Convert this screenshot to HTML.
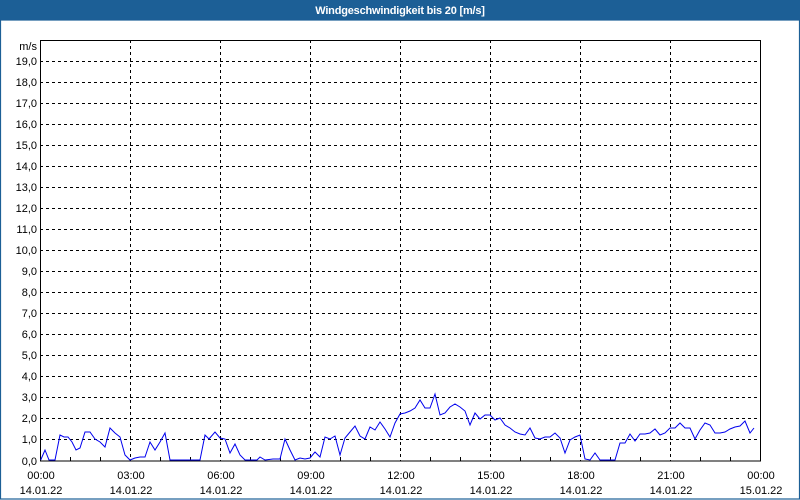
<!DOCTYPE html>
<html><head><meta charset="utf-8"><style>
html,body{margin:0;padding:0;background:#fff}
svg{display:block}
text{font-family:"Liberation Sans","DejaVu Sans",sans-serif;font-size:11px;fill:#000}
</style></head><body>
<svg width="800" height="500" viewBox="0 0 800 500" xmlns="http://www.w3.org/2000/svg">
<rect x="0" y="0" width="800" height="500" fill="#fff"/>
<rect x="0" y="0" width="800" height="20" fill="#1c5f96"/>
<rect x="0.5" y="20" width="799" height="479" fill="none" stroke="#1c5f96" stroke-width="1.2"/>
<text x="400" y="14" text-anchor="middle" style="font-weight:bold;fill:#fff;font-size:11px;letter-spacing:-0.2px">Windgeschwindigkeit bis 20 [m/s]</text>
<g stroke="#000" stroke-width="1" stroke-dasharray="3,3" shape-rendering="crispEdges">
<path d="M40 61.5H760M40 82.5H760M40 103.5H760M40 124.5H760M40 145.5H760M40 166.5H760M40 187.5H760M40 208.5H760M40 229.5H760M40 250.5H760M40 271.5H760M40 292.5H760M40 313.5H760M40 334.5H760M40 355.5H760M40 376.5H760M40 397.5H760M40 418.5H760M40 439.5H760"/>
<path d="M130.5 40V461M220.5 40V461M310.5 40V461M400.5 40V461M490.5 40V461M580.5 40V461M670.5 40V461"/>
</g>
<rect x="40.5" y="40.5" width="720" height="420.5" fill="none" stroke="#000" stroke-width="1" shape-rendering="crispEdges"/>
<g stroke="#000" stroke-width="1" shape-rendering="crispEdges">
<path d="M70.5 461V457M100.5 461V457M160.5 461V457M190.5 461V457M250.5 461V457M280.5 461V457M340.5 461V457M370.5 461V457M430.5 461V457M460.5 461V457M520.5 461V457M550.5 461V457M610.5 461V457M640.5 461V457M700.5 461V457M730.5 461V457"/>
</g>
<polyline fill="none" stroke="#0000ee" stroke-width="1" points="40.7,460 45,450 49,460 55,460 60,435 64,437 68,437 72,442 76,450 80,448 85,432 90,432 95,439 100,442 105,447 110,428 115,433 120,437 125,455 130,460 135,458 140,457 145,457 150,442 155,450 160,442 165,433 170,460 200,460 205,435 209,439 215,432 220,438 225,439 230,453 235,444 240,455 245,460 257,460 260,457 265,460 273,459 280,459 285,439 290,450 295,460 300,458 305,459 310,458 315,452 320,457 325,437 330,439 335,436 340,455 345,438 350,432 355,426 360,436 365,439 370,427 375,430 380,422 385,429 390,437 395,423 400,414 405,413 410,411 415,408 420,400 425,408 430,408 435,394 440,415 445,413 450,407 455,404 460,407 465,411 470,425 475,413 480,419 485,415 490,415 495,420 500,418 505,425 510,428 515,432 520,434 525,435 530,428 535,438 540,439 545,437 550,437 555,433 560,438 565,453 570,440 575,437 580,435 585,459 590,460 595,453 600,460 615,460 620,443 625,443 630,434 635,441 640,434 645,434 650,433 655,429 660,435 665,433 670,428 675,428 680,423 685,428 690,428 695,439 700,430 705,423 710,425 715,433 720,433 725,432 730,429 735,427 740,426 745,421 750,433 754,428"/>
<g text-anchor="end">
<text x="37" y="50">m/s</text>
<text x="37" y="65">19,0</text><text x="37" y="86">18,0</text><text x="37" y="107">17,0</text><text x="37" y="128">16,0</text><text x="37" y="149">15,0</text><text x="37" y="170">14,0</text><text x="37" y="191">13,0</text><text x="37" y="212">12,0</text><text x="37" y="233">11,0</text><text x="37" y="254">10,0</text><text x="37" y="275">9,0</text><text x="37" y="296">8,0</text><text x="37" y="317">7,0</text><text x="37" y="338">6,0</text><text x="37" y="359">5,0</text><text x="37" y="380">4,0</text><text x="37" y="401">3,0</text><text x="37" y="422">2,0</text><text x="37" y="443">1,0</text><text x="37" y="465">0,0</text>
</g>
<g text-anchor="middle">
<text x="41" y="479">00:00</text><text x="41" y="494">14.01.22</text>
<text x="131" y="479">03:00</text><text x="131" y="494">14.01.22</text>
<text x="221" y="479">06:00</text><text x="221" y="494">14.01.22</text>
<text x="311" y="479">09:00</text><text x="311" y="494">14.01.22</text>
<text x="401" y="479">12:00</text><text x="401" y="494">14.01.22</text>
<text x="491" y="479">15:00</text><text x="491" y="494">14.01.22</text>
<text x="581" y="479">18:00</text><text x="581" y="494">14.01.22</text>
<text x="671" y="479">21:00</text><text x="671" y="494">14.01.22</text>
<text x="761" y="479">00:00</text><text x="761" y="494">15.01.22</text>
</g>
</svg>
</body></html>
